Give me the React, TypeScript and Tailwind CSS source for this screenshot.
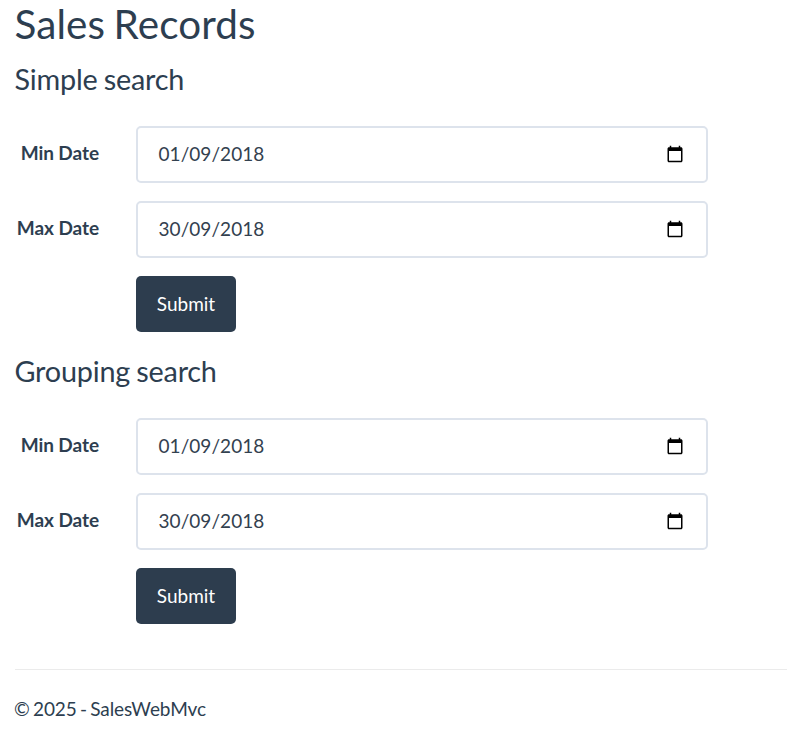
import React from "react";

function CalendarIcon() {
  return (
    <svg className="mb-px" width="18" height="18" viewBox="0 0 24 24" fill="#000" aria-hidden="true">
      <path d="M20 3h-1V1h-2v2H7V1H5v2H4c-1.1 0-2 .9-2 2v16c0 1.1.9 2 2 2h16c1.1 0 2-.9 2-2V5c0-1.1-.9-2-2-2zm0 18H4V8h16v13z" />
    </svg>
  );
}

function DateRow({ label, value }: { label: string; value: string }) {
  return (
    <div className="mb-[18px] flex h-[57px]">
      <label className="w-[84px] pt-[13px] text-right text-[19px] leading-[28px] font-bold tracking-[-0.06px]">{label}</label>
      <div className="ml-[37px] flex w-[572px] items-center justify-between rounded-[5px] border-2 border-[#dde3ec] pr-[22px] pl-[20.5px] text-[19px] text-[#33414f]">
        <span className="tracking-[0.05px]">{value}</span>
        <CalendarIcon />
      </div>
    </div>
  );
}

function SearchForm({ title }: { title: string }) {
  return (
    <section className="h-[292px]">
      <h2 className="-ml-[0.5px] mb-[29px] h-[36px] text-[28.8px] leading-[36px] tracking-[-0.2px] [word-spacing:-1px]">{title}</h2>
      <DateRow label="Min Date" value="01/09/2018" />
      <DateRow label="Max Date" value="30/09/2018" />
      <button className="ml-[121px] h-[56px] w-[100px] rounded-[5px] bg-[#2d3d4e] text-[19px] text-white">Submit</button>
    </section>
  );
}

export default function App() {
  return (
    <main className="h-[732px] overflow-hidden bg-white pl-[15px] font-[Lato,sans-serif] text-[#2d3e50]">
      <h1 className="-ml-[0.5px] mb-[12px] h-[49px] text-[40.4px] leading-[48px] tracking-[0.12px] [word-spacing:-2px]">Sales Records</h1>
      <SearchForm title="Simple search" />
      <SearchForm title="Grouping search" />
      <footer className="mt-[24px] border-t border-[#ebebeb] pt-[25px] text-[19px] leading-[28px] tracking-[-0.06px] [word-spacing:-1.6px]">
        <span className="-ml-px">© 2025 - SalesWebMvc</span>
      </footer>
    </main>
  );
}
